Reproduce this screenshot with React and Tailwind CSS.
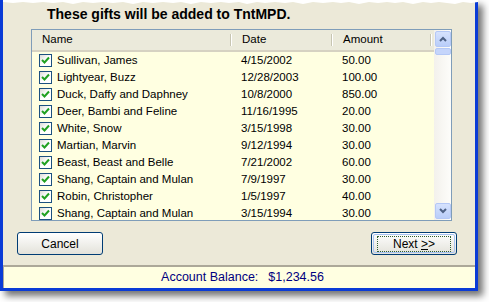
import React from 'react';

const gifts = [
  { name: 'Sullivan, James', date: '4/15/2002', amount: '50.00' },
  { name: 'Lightyear, Buzz', date: '12/28/2003', amount: '100.00' },
  { name: 'Duck, Daffy and Daphney', date: '10/8/2000', amount: '850.00' },
  { name: 'Deer, Bambi and Feline', date: '11/16/1995', amount: '20.00' },
  { name: 'White, Snow', date: '3/15/1998', amount: '30.00' },
  { name: 'Martian, Marvin', date: '9/12/1994', amount: '30.00' },
  { name: 'Beast, Beast and Belle', date: '7/21/2002', amount: '60.00' },
  { name: 'Shang, Captain and Mulan', date: '7/9/1997', amount: '30.00' },
  { name: 'Robin, Christopher', date: '1/5/1997', amount: '40.00' },
  { name: 'Shang, Captain and Mulan', date: '3/15/1994', amount: '30.00' },
];

function CheckBox() {
  return (
    <div className="w-[13px] h-[13px] border border-[#1c5180] bg-gradient-to-br from-[#dcdcd7] via-white to-white flex items-center justify-center">
      <svg width="9" height="9" viewBox="0 0 9 9">
        <path d="M1 4 L3.5 6.5 L8 1.5" stroke="#21a121" strokeWidth="2" fill="none" />
      </svg>
    </div>
  );
}

function ScrollButton({ down }) {
  return (
    <div className="h-[16px] w-[16px] rounded-[2px] border border-[#b4c8f6] bg-gradient-to-b from-[#d6e2fd] to-[#b9cdf9] flex items-center justify-center">
      <svg width="8" height="6" viewBox="0 0 8 6">
        <path d={down ? 'M1 1 L4 4 L7 1' : 'M1 5 L4 2 L7 5'} stroke="#4d6185" strokeWidth="2" fill="none" />
      </svg>
    </div>
  );
}

function HeaderCell({ label, width }) {
  return (
    <div className="relative h-full flex items-center pl-[10px]" style={{ width }}>
      {label}
      <div className="absolute right-0 top-[4px] bottom-[4px] w-[2px] border-l border-[#c7c5b2] bg-white" />
    </div>
  );
}

export default function App() {
  return (
    <div className="w-[489px] h-[302px] bg-white relative overflow-hidden" style={{ fontFamily: '"Liberation Sans", Arial, sans-serif' }}>
      <div className="w-[478px] h-[291px] bg-[#ece9d8] border-l-[3px] border-r-[3px] border-b-[3px] border-[#0a3bd6] shadow-[5px_5px_7px_rgba(0,0,0,0.55)] flex flex-col relative">
        {/* torn paper edge */}
        <svg className="absolute left-0 top-0" width="475" height="6" viewBox="0 0 475 6" preserveAspectRatio="none">
          <path d="M0 0 H475 V2 L468 3 L460 2 L452 4 L444 3 L436 2 L428 3 L420 2 L410 4 L400 2 L392 3 L384 2 L375 3 L366 2 L356 4 L346 2 L338 3 L330 2 L320 3 L310 2 L300 4 L290 2 L282 3 L272 2 L262 3 L254 2 L244 4 L236 2 L226 3 L218 2 L208 3 L198 2 L188 4 L178 2 L170 3 L160 2 L150 3 L140 2 L130 4 L120 2 L110 3 L100 2 L90 3 L80 2 L70 4 L60 2 L50 3 L40 2 L30 3 L20 2 L10 3 L0 2 Z" fill="white" />
        </svg>

        <div className="pl-[44px] pt-[6px] h-[29px] text-[14px] font-bold text-black leading-[16px]">
          These gifts will be added to TntMPD.
        </div>

        <div className="ml-[28px] w-[421px] h-[192px] border border-[#7f9db9] bg-[#ffffe1] flex text-[11.5px] text-black overflow-hidden">
          <div className="flex-1 flex flex-col">
            <div className="h-[22px] shrink-0 bg-[#ebeadb] border-b-[2px] border-[#d6d2c2] flex">
              <HeaderCell label="Name" width={200} />
              <HeaderCell label="Date" width={101} />
              <HeaderCell label="Amount" width={99} />
            </div>
            <div className="flex flex-col">
              {gifts.map((g, i) => (
                <div key={i} className="h-[17px] shrink-0 flex items-center">
                  <div className="w-[200px] flex items-center pl-[7px] gap-[5px]">
                    <CheckBox />
                    <span>{g.name}</span>
                  </div>
                  <div className="w-[101px] pl-[9px]">{g.date}</div>
                  <div className="w-[99px] pl-[9px]">{g.amount}</div>
                </div>
              ))}
            </div>
          </div>
          <div className="w-[17px] h-full bg-gradient-to-r from-[#f3f1ec] to-[#fdfdfa] flex flex-col items-center py-[1px]">
            <ScrollButton />
            <div className="mt-[1px] h-[7px] w-[16px] rounded-[2px] border border-[#b4c8f6] bg-[#c5d5fb]" />
            <div className="flex-1" />
            <ScrollButton down />
          </div>
        </div>

        <div className="flex justify-between pl-[14px] pr-[18px] mt-[11px] h-[23px] text-[12px] text-black">
          <button className="w-[86px] h-[23px] rounded-[3px] border border-[#003c74] bg-gradient-to-b from-white to-[#e3e2da]">
            Cancel
          </button>
          <button className="w-[86px] h-[23px] rounded-[3px] border border-[#003c74] bg-gradient-to-b from-white to-[#e3e2da] p-[1px]">
            <div className="w-full h-full rounded-[2px] border border-[#a7c3f2] flex items-center justify-center">
              <div className="border border-dotted border-[#2f5f2f] px-[15px] leading-[14px]">
                Next <span className="underline">&gt;</span>&gt;
              </div>
            </div>
          </button>
        </div>

        <div className="mt-[10px] border-t-2 border-[#aca899] flex-1 bg-[#ffffe1] border-l border-l-[#aca899] flex items-center justify-center text-[12.5px] text-[#000080] pl-[6px]">
          <span className="pr-[10px]">Account Balance:</span>
          <span>$1,234.56</span>
        </div>
      </div>
    </div>
  );
}
